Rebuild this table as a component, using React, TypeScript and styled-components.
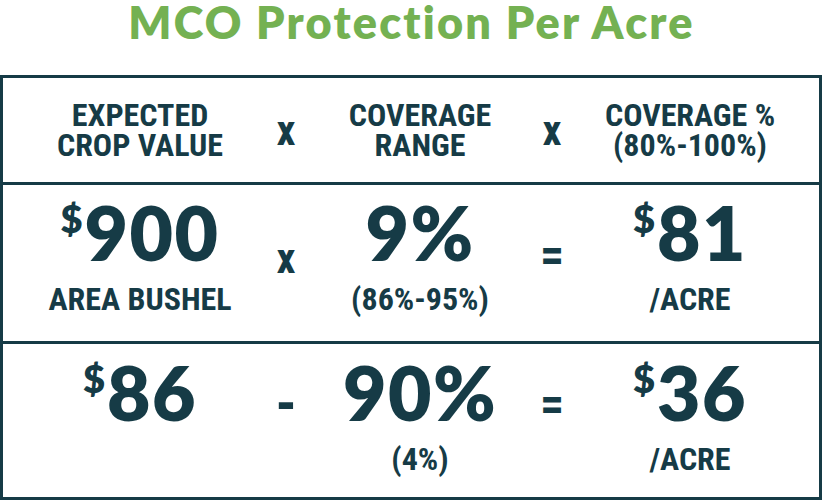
import React from 'react';
import styled, { createGlobalStyle } from 'styled-components';

const teal = '#163b46';
const green = '#74b152';
const narrow = `"Liberation Sans Narrow", "Roboto Condensed", "DejaVu Sans Condensed", "Liberation Sans", sans-serif`;
const wide = `Lato, "Open Sans", "Liberation Sans", sans-serif`;

type Cell = {
  kind: 'value' | 'op';
  dollar?: boolean;
  main: string;
  sub?: string;
  top?: number;
  size?: number;
};

type RowData = {
  height: number;
  pad: number;
  cells: Cell[];
};

const rows: RowData[] = [
  {
    height: 159,
    pad: 10,
    cells: [
      { kind: 'value', dollar: true, main: '900', sub: 'AREA BUSHEL' },
      { kind: 'op', main: 'x', top: 53, size: 42 },
      { kind: 'value', main: '9%', sub: '(86%-95%)' },
      { kind: 'op', main: '=', top: 46, size: 48 },
      { kind: 'value', dollar: true, main: '81', sub: '/ACRE' },
    ],
  },
  {
    height: 156,
    pad: 11,
    cells: [
      { kind: 'value', dollar: true, main: '86' },
      { kind: 'op', main: '-', top: 30, size: 60 },
      { kind: 'value', main: '90%', sub: '(4%)' },
      { kind: 'op', main: '=', top: 36, size: 48 },
      { kind: 'value', dollar: true, main: '36', sub: '/ACRE' },
    ],
  },
];

const GlobalStyle = createGlobalStyle`
  body {
    margin: 0;
    background: #ffffff;
  }
`;

const Page = styled.div`
  width: 823px;
  height: 500px;
  overflow: hidden;
  background: #ffffff;
`;

const Title = styled.h1`
  margin: 0;
  height: 75px;
  text-align: center;
  font-family: ${wide};
  font-weight: 800;
  font-size: 45px;
  letter-spacing: 2.2px;
  line-height: 1;
  color: ${green};
`;

const Table = styled.div`
  width: 822px;
  height: 425px;
  box-sizing: border-box;
  border: 3px solid ${teal};
`;

const Row = styled.div<{ $height: number; $first?: boolean }>`
  display: grid;
  grid-template-columns: 240px 52px 216px 48px 228px;
  padding-left: 17px;
  height: ${(p) => p.$height}px;
  box-sizing: border-box;
  border-top: ${(p) => (p.$first ? 'none' : `3px solid ${teal}`)};
`;

const Column = styled.div<{ $pad: number }>`
  display: flex;
  flex-direction: column;
  align-items: center;
  padding-top: ${(p) => p.$pad}px;
`;

const HeadLabel = styled.div`
  font-family: ${narrow};
  font-weight: 700;
  font-size: 32px;
  line-height: 30px;
  text-align: center;
  color: ${teal};
  white-space: nowrap;
`;

const Operator = styled.div<{ $size: number }>`
  font-family: ${narrow};
  font-weight: 700;
  font-size: ${(p) => p.$size}px;
  line-height: 1;
  color: ${teal};
`;

const Amount = styled.div`
  display: flex;
  align-items: flex-start;
  font-family: ${wide};
  font-weight: 800;
  font-size: 75px;
  letter-spacing: 1.5px;
  line-height: 1;
  color: ${teal};
`;

const Dollar = styled.span`
  font-size: 38px;
  line-height: 1;
  letter-spacing: 0;
  margin-top: 4px;
  margin-right: 2px;
`;

const SubLabel = styled.div`
  margin-top: 13px;
  font-family: ${narrow};
  font-weight: 700;
  font-size: 32px;
  line-height: 1;
  color: ${teal};
  white-space: nowrap;
`;

export default function App() {
  return (
    <Page>
      <GlobalStyle />
      <Title>MCO Protection Per Acre</Title>
      <Table>
        <Row $height={104} $first>
          <Column $pad={22}>
            <HeadLabel>
              EXPECTED
              <br />
              CROP VALUE
            </HeadLabel>
          </Column>
          <Column $pad={32}>
            <Operator $size={42}>x</Operator>
          </Column>
          <Column $pad={22}>
            <HeadLabel>
              COVERAGE
              <br />
              RANGE
            </HeadLabel>
          </Column>
          <Column $pad={32}>
            <Operator $size={42}>x</Operator>
          </Column>
          <Column $pad={22}>
            <HeadLabel>
              COVERAGE %
              <br />
              (80%-100%)
            </HeadLabel>
          </Column>
        </Row>
        {rows.map((row, i) => (
          <Row key={i} $height={row.height}>
            {row.cells.map((c, j) =>
              c.kind === 'op' ? (
                <Column key={j} $pad={c.top ?? 0}>
                  <Operator $size={c.size ?? 42}>{c.main}</Operator>
                </Column>
              ) : (
                <Column key={j} $pad={row.pad}>
                  <Amount>
                    {c.dollar && <Dollar>$</Dollar>}
                    {c.main}
                  </Amount>
                  {c.sub && <SubLabel>{c.sub}</SubLabel>}
                </Column>
              )
            )}
          </Row>
        ))}
      </Table>
    </Page>
  );
}
